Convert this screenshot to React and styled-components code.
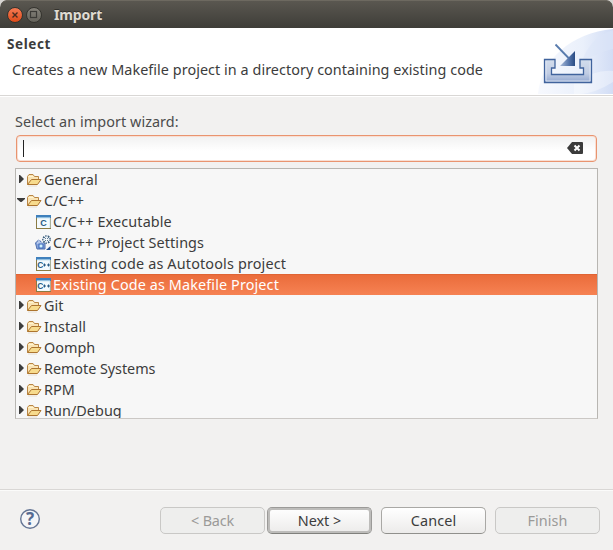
import React from "react";
import styled, { createGlobalStyle, css } from "styled-components";

const GlobalStyle = createGlobalStyle`
  * { box-sizing: border-box; }
  html, body { margin: 0; background: #d8d6d3; overflow: hidden; }
  body { font: 14.4px/21px "Noto Sans", "Open Sans", sans-serif; color: #3c3c3c; }
`;

const Window = styled.main`
  width: 613px;
  height: 550px;
  display: flex;
  flex-direction: column;
  background: #f2f1f0;
  border-radius: 7px 7px 0 0;
  overflow: hidden;
`;

const Text = styled.span`
  white-space: pre;
  letter-spacing: ${(p) => p.$tracking || 0}px;
`;

const TitleBar = styled.header`
  height: 28px;
  flex: none;
  display: flex;
  align-items: center;
  padding: 1px 0 0 7px;
  gap: 3px;
  background: linear-gradient(#5b5851, #3e3d38);
  box-shadow: inset 0 1px #6d6960;
  border-radius: 7px 7px 0 0;
`;

const WindowButton = styled.button`
  width: 16px;
  height: 16px;
  padding: 0;
  display: flex;
  border: 1px solid #35342f;
  border-radius: 50%;
  background: ${(p) => (p.$close ? "linear-gradient(#f67b54, #df4b19)" : "linear-gradient(#85827a, #65635b)")};
`;

const Title = styled.h1`
  margin: 0 0 0 9px;
  font-size: 14px;
  line-height: 20px;
  font-weight: 700;
  color: #dfdbd2;
  text-shadow: 0 -1px #33322d;
`;

const Banner = styled.section`
  height: 68px;
  flex: none;
  display: flex;
  justify-content: space-between;
  background: #fff;
  border-bottom: 1px solid #d9d7d5;
  box-shadow: 0 1px #fff;
`;

const BannerCopy = styled.div`
  padding: 6px 0 0 7px;
`;

const BannerTitle = styled.h2`
  margin: 0;
  font-size: 13.5px;
  line-height: 21px;
  font-weight: 700;
`;

const BannerMessage = styled.p`
  margin: 5px 0 0 5px;
  line-height: 20px;
`;

const Content = styled.section`
  flex: 1;
  padding: 15px 15px 0;
`;

const FieldLabel = styled.label`
  display: block;
  height: 24px;
  line-height: 21px;
  color: #4c4c4c;
`;

const SearchField = styled.div`
  height: 27px;
  margin: 0 1px 6px;
  padding: 0 13px 1px 6px;
  display: flex;
  align-items: center;
  justify-content: space-between;
  border: 1px solid #e9946f;
  border-radius: 4px;
  background: linear-gradient(#f1f1f1, #fff 60%);
  box-shadow: inset 0 0 0 1px #f8dfd4;
`;

const Caret = styled.i`
  width: 1px;
  height: 17px;
  background: #222;
`;

const Tree = styled.ul`
  width: 583px;
  height: 251px;
  margin: 0;
  padding: 0;
  list-style: none;
  border: 1px solid #b8b6b2;
  border-bottom-color: #cbc8c5;
  background: #f7f7f7;
  overflow: hidden;
`;

const Row = styled.li`
  height: 21px;
  display: flex;
  align-items: center;
  padding-left: ${(p) => (p.$child ? 19 : 1)}px;
  ${(p) =>
    p.$selected &&
    css`
      color: #fff;
      background: linear-gradient(#ea6b3a, #f68253);
      box-shadow: inset 0 1px #e06434;
    `}
`;

const RowText = styled(Text)`
  margin-left: 2px;
`;

const Footer = styled.footer`
  height: 61px;
  flex: none;
  display: flex;
  align-items: flex-start;
  padding: 17px 13px 0 19px;
  border-top: 1px solid #d9d7d5;
  box-shadow: inset 0 1px #fbfbfa;
`;

const Actions = styled.div`
  display: flex;
  margin-left: auto;
`;

const Action = styled.button`
  width: 105px;
  height: 27px;
  padding: 0;
  margin-left: ${(p) => p.$gap || 0}px;
  font: inherit;
  line-height: 24px;
  color: #3c3c3c;
  border: 1px solid #a9a8a5;
  border-bottom-color: #90908c;
  border-radius: 5px;
  background: linear-gradient(#fff, #ecebea);
  ${(p) =>
    p.$primary &&
    css`
      border-color: #9b9a98;
      border-bottom-color: #80807c;
      box-shadow: inset 0 0 0 2px #bdbcba;
    `}
  &:disabled {
    color: #9b9a98;
    border-color: #c9c8c6;
    background: #eeeeed;
  }
`;

const Drawing = styled.svg`
  display: block;
  flex: none;
`;

function CloseGlyph() {
  return (
    <Drawing width="14" height="14">
      <path d="m4.5 4.5 5 5m0-5-5 5" stroke="#4a2c20" strokeWidth="1.4" />
    </Drawing>
  );
}

function MaximizeGlyph() {
  return (
    <Drawing width="14" height="14">
      <rect x="3.5" y="3.5" width="6" height="6" fill="none" stroke="#3b3a36" strokeWidth="1.2" />
    </Drawing>
  );
}

function BannerArt() {
  return (
    <Drawing width="76" height="67" viewBox="537 28 76 67">
      <defs>
        <linearGradient id="sweep" x1="0" y1="0" x2="1" y2="0">
          <stop stopColor="#f7f9fe" />
          <stop offset=".6" stopColor="#eaf0fb" />
          <stop offset="1" stopColor="#d2ddf5" />
        </linearGradient>
        <linearGradient id="tray" x1="0" y1="0" x2="0" y2="1">
          <stop stopColor="#d3dded" />
          <stop offset=".6" stopColor="#c1cde4" />
          <stop offset="1" stopColor="#91a7d0" />
        </linearGradient>
        <linearGradient id="head" x1="0" y1="0" x2="1" y2="0">
          <stop stopColor="#a9bbd9" />
          <stop offset=".6" stopColor="#5575ab" />
          <stop offset="1" stopColor="#294b83" />
        </linearGradient>
      </defs>
      <path d="M538 94C541 60 571 33 613 29V94Z" fill="url(#sweep)" />
      <path d="M582 62C587 46 597 35 613 30V49Q595 53 582 62" fill="#dce5f8" opacity=".55" />
      <path d="M574 83Q596 69 613 71V82Q596 93 580 94H574Z" fill="#fff" opacity=".35" />
      <path d="M544.5 59.5h10.5v8.5h-3.5v6.5h32V68h-3.5v-8.5h11.5v23h-47z" fill="url(#tray)" stroke="#40639d" strokeWidth="1.3" />
      <path d="M546 61v20h44v-20" fill="none" stroke="#e3eaf5" opacity=".8" />
      <path d="m555.5 44.5 14 14.5" stroke="#587bad" strokeWidth="1.8" />
      <path d="M575 51v15h-15z" fill="url(#head)" />
    </Drawing>
  );
}

function ClearIcon() {
  return (
    <Drawing width="16" height="12">
      <path d="M5 0h10q1 0 1 1v10q0 1-1 1H5L0 6z" fill="#3b3b3b" />
      <path d="m7.5 3.5 5 5m0-5-5 5" stroke="#fff" strokeWidth="2" />
    </Drawing>
  );
}

function Disclosure({ open }) {
  return (
    <Drawing width="9" height="13">
      {open ? (
        <path d="M0 4h8v1L4.5 8h-1L0 5z" fill="#3c3c3c" />
      ) : (
        <path d="M2 2h1l3.5 3.5v1L3 10H2z" fill="#3c3c3c" />
      )}
    </Drawing>
  );
}

function FolderIcon() {
  return (
    <Drawing width="16" height="16">
      <path d="M1.5 12.5v-8L3 2.5h4l1.5 2h4v3" fill="#f9e3b4" stroke="#b98543" />
      <path d="M2.5 4.5h5" stroke="#fff4cf" />
      <path d="m1.5 12.5 4-5H15l-3.5 5z" fill="#f7db8d" stroke="#ad752f" strokeLinejoin="round" />
      <path d="M2 14h9" stroke="#e8dfd2" />
    </Drawing>
  );
}

const Glyph = styled.text`
  font: 700 ${(p) => p.$size}px "Liberation Sans", sans-serif;
  fill: #275a85;
`;

function CodeIcon({ plus }) {
  return (
    <Drawing width="16" height="16">
      <rect x="1.5" y="1.5" width="14" height="13" fill="#f4fafd" stroke="#8b7b43" />
      <path d="M2 4h13v10" fill="none" stroke="#cae4f2" />
      <path d="M1 1h15v3H1z" fill="#3f80bc" />
      <path d="M2 3.5h13" stroke="#91bfe0" />
      <Glyph x={plus ? 2.2 : 5.2} y="12" $size={plus ? 8.5 : 9}>C</Glyph>
      {plus && <path d="M8 9h3m-1.5-1.5v3M12 9h3m-1.5-1.5v3" stroke="#275a85" />}
    </Drawing>
  );
}

function SettingsIcon() {
  return (
    <Drawing width="16" height="16">
      <path d="m.5 8 3-3 2 1 1 2H10v6H2z" fill="#87a5dc" stroke="#4e6fac" />
      <path d="M2 8h7m-6-2h2" stroke="#e1eafb" />
      <rect x="4" y="9" width="4" height="4" fill="#d1f1fc" stroke="#3763b5" />
      <circle cx="11.5" cy="4.5" r="3.7" fill="#e6edf3" stroke="#365979" strokeWidth="1.3" strokeDasharray="1.5 1.1" />
      <path d="m8.5 1.5 6 6m0-6-6 6" stroke="#56758d" />
      <circle cx="11.5" cy="4.5" r="1" fill="#fff" />
      <path d="M15.5 11v4H11z" fill="#234f91" />
    </Drawing>
  );
}

const HelpGlyph = styled.text`
  font: 700 17px "Noto Sans", sans-serif;
  fill: #566b91;
`;

function HelpIcon() {
  return (
    <Drawing width="22" height="24">
      <circle cx="11" cy="12" r="9.3" fill="#f5f6f8" stroke="#647594" strokeWidth="1.4" />
      <HelpGlyph x="11" y="18" textAnchor="middle">?</HelpGlyph>
    </Drawing>
  );
}

const entries = [
  { name: "General", kind: "folder", tracking: 0.1 },
  { name: "C/C++", kind: "folder", open: true },
  { name: "C/C++ Executable", kind: "c", tracking: 0.12 },
  { name: "C/C++ Project Settings", kind: "settings", tracking: 0.08 },
  { name: "Existing code as Autotools project", kind: "cpp", tracking: 0.16 },
  { name: "Existing Code as Makefile Project", kind: "cpp", selected: true, tracking: 0.12 },
  { name: "Git", kind: "folder" },
  { name: "Install", kind: "folder", tracking: 0.1 },
  { name: "Oomph", kind: "folder" },
  { name: "Remote Systems", kind: "folder", tracking: -0.05 },
  { name: "RPM", kind: "folder" },
  { name: "Run/Debug", kind: "folder", tracking: 0.05 },
];

function TreeRow({ entry }) {
  const child = entry.kind !== "folder";
  return (
    <Row $child={child} $selected={entry.selected}>
      {!child && <Disclosure open={entry.open} />}
      {entry.kind === "folder" && <FolderIcon />}
      {entry.kind === "settings" && <SettingsIcon />}
      {(entry.kind === "c" || entry.kind === "cpp") && <CodeIcon plus={entry.kind === "cpp"} />}
      <RowText $tracking={entry.tracking}>{entry.name}</RowText>
    </Row>
  );
}

export default function App() {
  return (
    <>
      <GlobalStyle />
      <Window>
        <TitleBar>
          <WindowButton $close aria-label="Close"><CloseGlyph /></WindowButton>
          <WindowButton aria-label="Maximize"><MaximizeGlyph /></WindowButton>
          <Title><Text $tracking={-0.15}>Import</Text></Title>
        </TitleBar>
        <Banner>
          <BannerCopy>
            <BannerTitle><Text $tracking={0.6}>Select</Text></BannerTitle>
            <BannerMessage>
              <Text $tracking={0.05}>Creates a new Makefile project in a directory containing existing code</Text>
            </BannerMessage>
          </BannerCopy>
          <BannerArt />
        </Banner>
        <Content>
          <FieldLabel><Text $tracking={0.06}>Select an import wizard:</Text></FieldLabel>
          <SearchField><Caret /><ClearIcon /></SearchField>
          <Tree>{entries.map((entry) => <TreeRow key={entry.name} entry={entry} />)}</Tree>
        </Content>
        <Footer>
          <HelpIcon />
          <Actions>
            <Action disabled><Text $tracking={-0.2}>&lt; Back</Text></Action>
            <Action $gap={2} $primary><Text>Next &gt;</Text></Action>
            <Action $gap={9}><Text $tracking={0.1}>Cancel</Text></Action>
            <Action $gap={9} disabled><Text $tracking={0.1}>Finish</Text></Action>
          </Actions>
        </Footer>
      </Window>
    </>
  );
}
